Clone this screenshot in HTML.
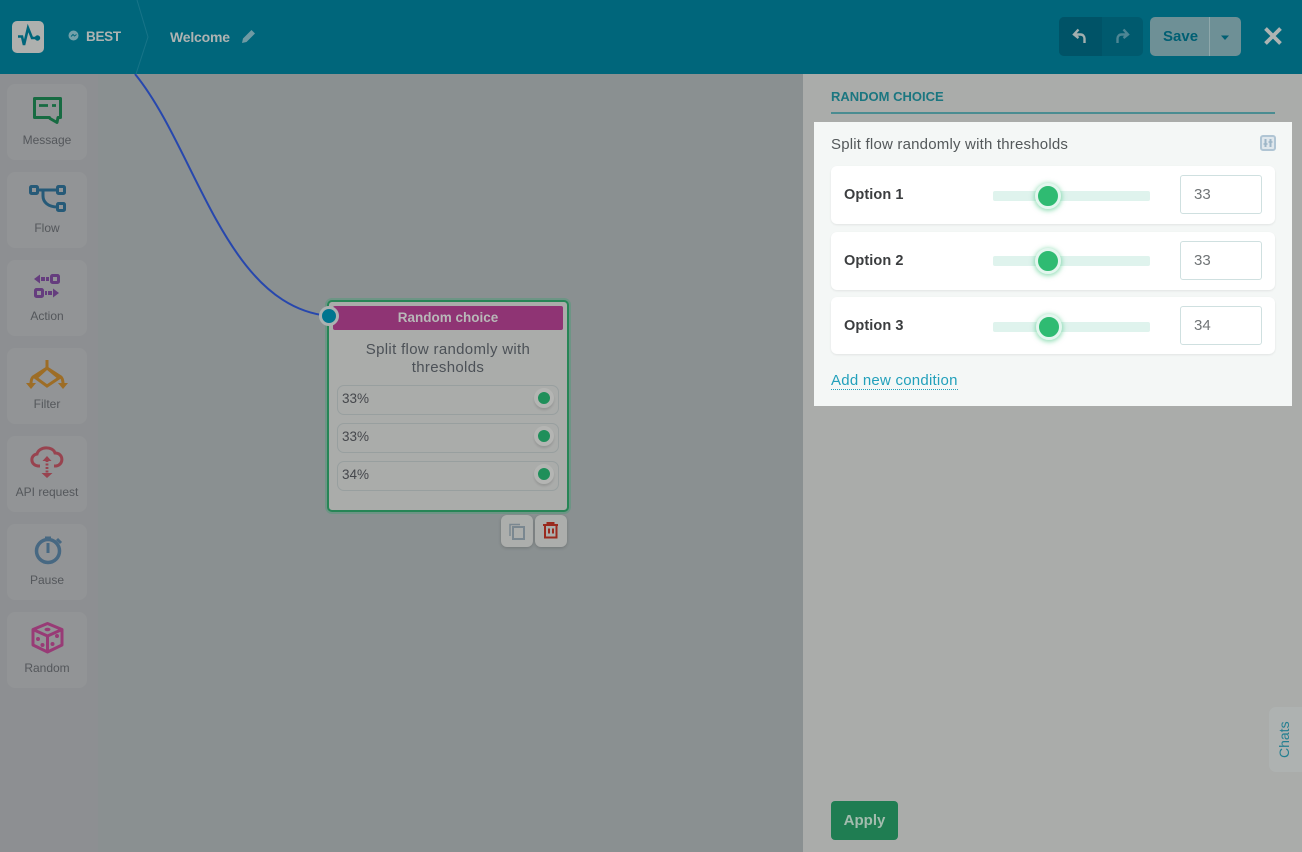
<!DOCTYPE html>
<html><head><meta charset="utf-8"><style>
*{box-sizing:border-box}
html,body{margin:0;padding:0;width:1302px;height:852px;overflow:hidden;font-family:"Liberation Sans",sans-serif}
body{position:relative;background:#8a9091}
.a{position:absolute}
.tile{position:absolute;left:7px;width:80px;height:76px;background:#929496;border-radius:8px}
.tile span{position:absolute;left:0;right:0;top:49px;text-align:center;font-size:12px;color:#54575b;white-space:nowrap}
.tile svg{position:absolute;left:20px;top:9px;overflow:visible}
.row{position:absolute;left:337px;width:222px;height:30px;border:1px solid #989f9f;border-radius:7px;font-size:13.5px;color:#45474c;padding:5px 0 0 4px}
.dot{position:absolute;left:196px;top:2px;width:20px;height:20px;border-radius:50%;background:#1f8f5a;border:4px solid #b4b5b3;box-shadow:0 2px 2px rgba(0,0,0,.12)}
.opt{position:absolute;left:831px;width:444px;height:58px;background:#fff;border-radius:6px;box-shadow:0 1px 2px rgba(0,0,0,.08)}
.opt b{position:absolute;left:13px;top:21px;font-size:14.5px;color:#3b3d3f;letter-spacing:.1px}
.tr{position:absolute;left:162px;top:25px;width:157px;height:10px;background:#dff3ed;border-radius:2px}
.th{position:absolute;top:17px;width:26px;height:26px;border-radius:50%;background:#2fbb72;border:3px solid #e3f6ee;box-shadow:0 1px 5px 1px rgba(50,193,118,.5)}
.inp{position:absolute;left:349px;top:9px;width:82px;height:39px;border:1px solid #cfe0e0;border-radius:3px;font-size:15px;color:#707476;padding:10px 0 0 13px;background:#fff}
.sb{position:absolute;width:32px;height:32px;top:515px;background:#acaeac;border-radius:6px;box-shadow:0 1px 3px rgba(0,0,0,.18)}
</style></head><body>

<div class="a" style="left:0;top:74px;width:98px;height:778px;background:#8d8f92"></div>
<div class="a" style="left:803px;top:74px;width:499px;height:778px;background:#aaacaa"></div>

<svg class="a" style="left:0;top:0" width="803" height="852"><path d="M135 74C197 150 225 306 329 316" fill="none" stroke="#2747ad" stroke-width="2"/></svg>

<!-- header -->
<div class="a" style="left:0;top:0;width:1302px;height:74px;background:#00667b"></div>
<svg class="a" style="left:130px;top:0" width="24" height="74"><path d="M7 0L18 37L6 74" fill="none" stroke="#177488" stroke-width="1"/></svg>
<div class="a" style="left:12px;top:21px;width:32px;height:32px;background:#aeb0ae;border-radius:5px"></div>
<svg class="a" style="left:12px;top:21px" width="32" height="32"><path d="M6 15.500H10L12 24L16 7L20 17H26" fill="none" stroke="#00667b" stroke-width="2.600"/><circle cx="25.500" cy="17" r="2.700" fill="#00667b"/></svg>
<svg class="a" style="left:68px;top:30px" width="12" height="12"><circle cx="5.500" cy="5.500" r="5" fill="#72a0a9"/><path d="M3 6.500L5 4.500L6.500 6L8.500 4.500" stroke="#00667b" fill="none"/></svg>
<div class="a" style="left:86px;top:29px;font-size:13.500px;font-weight:bold;color:#aeb3b2;letter-spacing:-.3px">BEST</div>
<div class="a" style="left:170px;top:29px;font-size:14px;font-weight:bold;color:#aeb3b2;letter-spacing:-.2px">Welcome</div>
<svg class="a" style="left:241px;top:29px" width="15" height="15"><path d="M1 14L2 9.500L10.500 1L14 4.500L5.500 13Z" fill="#6f9aa3"/></svg>

<div class="a" style="left:1059px;top:17px;width:84px;height:39px;background:#005a6e;border-radius:5px"></div>
<div class="a" style="left:1059px;top:17px;width:43px;height:39px;background:#005367;border-radius:5px 0 0 5px"></div>
<svg class="a" style="left:1072px;top:28px" width="16" height="17"><path d="M2.500 6.500H8.500C11 6.500 12.500 8.500 12.500 10.500V15M6.500 1.500L2 6.500L6.500 10" fill="none" stroke="#a3afaf" stroke-width="2.400"/></svg>
<svg class="a" style="left:1114px;top:28px" width="16" height="17"><path d="M13.500 6.500H7.500C5 6.500 3.500 8.500 3.500 10.500V15M9.500 1.500L14 6.500L9.500 10" fill="none" stroke="#4e8694" stroke-width="2.400"/></svg>

<div class="a" style="left:1150px;top:17px;width:91px;height:39px;background:#6e9096;border-radius:5px"></div>
<div class="a" style="left:1209px;top:17px;width:1px;height:39px;background:#8fa8ab"></div>
<div class="a" style="left:1163px;top:28px;font-size:15px;font-weight:bold;color:#005f73">Save</div>
<svg class="a" style="left:1220px;top:35px" width="10" height="6"><path d="M1 .5H9L5 5Z" fill="#005f73"/></svg>
<svg class="a" style="left:1263px;top:26px" width="20" height="20"><path d="M2.500 2.500L17.500 17.500M17.500 2.500L2.500 17.500" stroke="#aeb3b2" stroke-width="3.800"/></svg>

<!-- sidebar -->
<div class="tile" style="top:84px"><svg width="40" height="32"><path d="M7.500 5.500H33.500V24.500H31L30 29.500L23 25.500L22.500 24.500H7.500Z" fill="none" stroke="#176b42" stroke-width="3" stroke-linejoin="round"/><path d="M12 12.500H21M25 12.500H29" stroke="#176b42" stroke-width="2.800"/></svg><span>Message</span></div>
<div class="tile" style="top:172px"><svg width="40" height="34"><g fill="none" stroke="#265a78" stroke-width="3"><rect x="3.500" y="5.500" width="7" height="7" rx="1"/><rect x="30.500" y="5.500" width="7" height="7" rx="1"/><rect x="30.500" y="22.500" width="7" height="7" rx="1"/><path d="M10.500 9H30.500M16 9V15C16 21 21 26 30.500 26"/></g></svg><span>Flow</span></div>
<div class="tile" style="top:260px"><svg width="40" height="34"><g fill="#653d7e"><path d="M7 10L13 5.500V14.500Z"/><rect x="14" y="8" width="4" height="4"/><rect x="19" y="8" width="3" height="4"/><path d="M32 24L26 19.500V28.500Z"/><rect x="21" y="22" width="4" height="4"/><rect x="18" y="22" width="2" height="4"/></g><g fill="none" stroke="#653d7e" stroke-width="3"><rect x="24.500" y="6.500" width="7" height="7" rx="1"/><rect x="8.500" y="20.500" width="7" height="7" rx="1"/></g></svg><span>Action</span></div>
<div class="tile" style="top:348px"><svg width="40" height="34"><g fill="none" stroke="#9d6d26" stroke-width="3"><path d="M20 3V11L6 20Q4 22 4 27M20 11L34 20Q36 22 36 27M20 11L9 21L20 29L32 21Z"/></g><path d="M-1 26H9L4 32Z M31 26H41L36 32Z" fill="#9d6d26"/></svg><span>Filter</span></div>
<div class="tile" style="top:436px"><svg width="40" height="34"><path d="M13 21H11C3 20 3 10 10 9C12 1 26 1 28 8C37 8 37 20 29 21H27" fill="none" stroke="#98434f" stroke-width="3"/><path d="M20 11L24.500 16H15.500ZM20 33L25.500 28H14.500Z" fill="#98434f"/><path d="M20 15V29" stroke="#98434f" stroke-width="2.800" stroke-dasharray="2 1.500"/></svg><span>API request</span></div>
<div class="tile" style="top:524px"><svg width="40" height="34"><circle cx="21" cy="18" r="11.500" fill="none" stroke="#476882" stroke-width="3.500"/><path d="M18 5H24M30 6L34 10" stroke="#476882" stroke-width="3"/><path d="M21 10V20" stroke="#476882" stroke-width="3"/></svg><span>Pause</span></div>
<div class="tile" style="top:612px"><svg width="40" height="34"><g fill="none" stroke="#983b76" stroke-width="3" stroke-linejoin="round"><path d="M20.500 2.500L35 8.500V24L20.500 31L6 24V8.500Z"/><path d="M6 8.500L20.500 15L35 8.500M20.500 15V31"/></g><g fill="#983b76"><ellipse cx="20.500" cy="8.500" rx="3" ry="1.700"/><circle cx="11" cy="18" r="2"/><circle cx="15.500" cy="24" r="2"/><circle cx="30" cy="15" r="2"/><circle cx="25.500" cy="23" r="2"/></g></svg><span>Random</span></div>

<!-- card -->
<div class="a" style="left:325px;top:298px;width:246px;height:216px;border-radius:7px;background:#6d9585"></div>
<div class="a" style="left:327px;top:300px;width:242px;height:212px;background:#aaacaa;border:2px solid #278556;border-radius:5px"></div>
<div class="a" style="left:333px;top:306px;width:230px;height:24px;background:#8f3474;border-radius:2px;text-align:center;font-size:13.500px;font-weight:bold;color:#b8b8b8;line-height:23px">Random choice</div>
<div class="a" style="left:335px;top:341px;width:226px;text-align:center;font-size:15px;letter-spacing:.32px;line-height:18px;color:#4c5157">Split flow randomly with thresholds</div>
<div class="row" style="top:385px">33%<i class="dot"></i></div>
<div class="row" style="top:423px">33%<i class="dot"></i></div>
<div class="row" style="top:461px">34%<i class="dot"></i></div>
<div class="a" style="left:319px;top:306px;width:20px;height:20px;border-radius:50%;background:#00758f;border:3.500px solid #acb1b1"></div>
<div class="sb" style="left:501px"><svg width="32" height="32"><path d="M9 21V9.500H19" fill="none" stroke="#7a8790" stroke-width="1.500"/><rect x="12" y="12" width="11" height="12" fill="none" stroke="#7a8790" stroke-width="2"/></svg></div>
<div class="sb" style="left:535px"><svg width="32" height="32"><path d="M8 10H23M12.500 10V8H18.500V10" fill="none" stroke="#9a2a1e" stroke-width="2"/><path d="M10 11V22.500H21.500V11" fill="none" stroke="#9a2a1e" stroke-width="2"/><path d="M14 13.500V18.500M18 13.500V18.500" stroke="#9a2a1e" stroke-width="2"/></svg></div>

<!-- panel -->
<div class="a" style="left:831px;top:89px;font-size:13px;font-weight:bold;color:#1b7680">RANDOM CHOICE</div>
<div class="a" style="left:831px;top:112px;width:444px;height:2px;background:#4a8c91"></div>
<div class="a" style="left:814px;top:122px;width:478px;height:284px;background:#f4f7f6"></div>
<div class="a" style="left:831px;top:136px;font-size:15px;letter-spacing:.2px;color:#53585a">Split flow randomly with thresholds</div>
<svg class="a" style="left:1260px;top:135px" width="16" height="16"><rect x="1" y="1" width="14" height="14" rx="2" fill="#dfe7ec" stroke="#b0c5d4" stroke-width="2"/><path d="M5.500 4V12M10.500 4V12" stroke="#9db6c7" stroke-width="2"/><path d="M3.500 9H7.500M8.500 7H12.500" stroke="#9db6c7" stroke-width="1.500"/></svg>

<div class="opt" style="top:166px"><b>Option 1</b><div class="tr"></div><div class="th" style="left:204px"></div><div class="inp">33</div></div>
<div class="opt" style="top:232px"><b>Option 2</b><div class="tr" style="top:24px"></div><div class="th" style="left:204px;top:16px"></div><div class="inp">33</div></div>
<div class="opt" style="top:297px;height:57px"><b>Option 3</b><div class="tr" style="top:25px"></div><div class="th" style="left:205px;top:17px"></div><div class="inp">34</div></div>
<div class="a" style="left:831px;top:372px;font-size:15px;letter-spacing:.24px;color:#22a0bb;border-bottom:1px dotted #22a0bb;line-height:17px;padding-bottom:0">Add new condition</div>

<div class="a" style="left:831px;top:801px;width:67px;height:39px;background:#1f7d52;border-radius:4px;text-align:center;font-size:15px;font-weight:bold;color:#a3bcae;line-height:40px">Apply</div>

<div class="a" style="left:1269px;top:707px;width:33px;height:65px;background:#aeb2b1;border-radius:7px 0 0 7px"></div>
<div class="a" style="left:1277px;top:758px;transform-origin:0 0;transform:rotate(-90deg);font-size:14px;color:#247f91;width:50px;line-height:14px;white-space:nowrap">Chats</div>
</body></html>
